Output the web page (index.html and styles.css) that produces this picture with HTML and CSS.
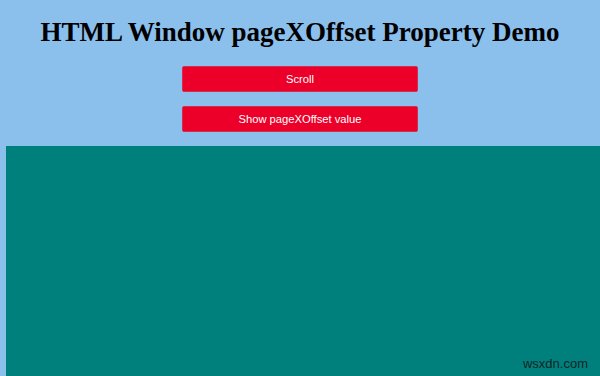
FILE: index.html
```html
<!DOCTYPE html>
<html lang="en">
<head>
<meta charset="UTF-8">
<meta name="viewport" content="width=device-width, initial-scale=1.0">
<title>HTML Window pageXOffset Property Demo</title>
<link rel="stylesheet" href="styles.css">
</head>
<body>
  <h1>HTML Window pageXOffset Property Demo</h1>
  <div class="actions">
    <button class="btn">Scroll</button>
    <button class="btn">Show pageXOffset value</button>
  </div>
  <div class="box">
    <span class="mark">wsxdn.com</span>
  </div>
</body>
</html>
```

FILE: styles.css
```css
html, body {
margin: 0;
padding: 0;
height: 100%;
}

body {
background-color: #8bbfec;
font-family: "Liberation Serif", serif;
display: flex;
flex-direction: column;
overflow: hidden;
}

h1 {
margin: 16px 0 0;
font-size: 27px;
line-height: 32px;
text-align: center;
color: #000;
}

.actions {
margin-top: 18px;
display: flex;
flex-direction: column;
align-items: center;
gap: 14px;
}

.btn {
width: 236px;
height: 26px;
background-color: #ec0029;
color: #fff;
border: 1px solid #d0304f;
border-radius: 2px;
font-family: "Liberation Sans", Arial, sans-serif;
font-size: 11.2px;
cursor: pointer;
}

.box {
margin: 14px 0 0 6px;
flex: 1;
background-color: #00807c;
position: relative;
}

.mark {
position: absolute;
right: 12px;
bottom: 5px;
font-family: "Liberation Sans", Arial, sans-serif;
font-size: 13px;
color: #142424;
}
```
